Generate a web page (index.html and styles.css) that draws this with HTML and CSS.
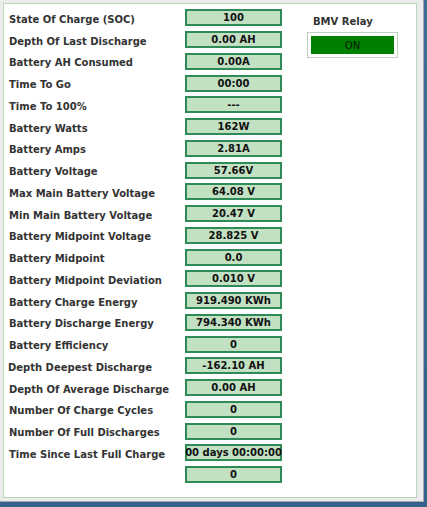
FILE: index.html
```html
<!DOCTYPE html>
<html>
<head>
<meta charset="utf-8">
<link rel="stylesheet" href="styles.css">
</head>
<body>
<div class="window">
  <div class="panel">
    <div class="readings">
      <div class="label">State Of Charge (SOC)</div><div class="value">100</div>
      <div class="label">Depth Of Last Discharge</div><div class="value">0.00 AH</div>
      <div class="label">Battery AH Consumed</div><div class="value">0.00A</div>
      <div class="label">Time To Go</div><div class="value">00:00</div>
      <div class="label">Time To 100%</div><div class="value">---</div>
      <div class="label">Battery Watts</div><div class="value">162W</div>
      <div class="label">Battery Amps</div><div class="value">2.81A</div>
      <div class="label">Battery Voltage</div><div class="value">57.66V</div>
      <div class="label">Max Main Battery Voltage</div><div class="value">64.08 V</div>
      <div class="label">Min Main Battery Voltage</div><div class="value">20.47 V</div>
      <div class="label">Battery Midpoint Voltage</div><div class="value">28.825 V</div>
      <div class="label">Battery Midpoint</div><div class="value">0.0</div>
      <div class="label">Battery Midpoint Deviation</div><div class="value">0.010 V</div>
      <div class="label">Battery Charge Energy</div><div class="value">919.490 KWh</div>
      <div class="label">Battery Discharge Energy</div><div class="value">794.340 KWh</div>
      <div class="label">Battery Efficiency</div><div class="value">0</div>
      <div class="label label-shift">Depth Deepest Discharge</div><div class="value">-162.10 AH</div>
      <div class="label">Depth Of Average Discharge</div><div class="value">0.00 AH</div>
      <div class="label">Number Of Charge Cycles</div><div class="value">0</div>
      <div class="label">Number Of Full Discharges</div><div class="value">0</div>
      <div class="label">Time Since Last Full Charge</div><div class="value">00 days 00:00:00</div>
      <div class="label"></div><div class="value">0</div>
    </div>
    <div class="relay">
      <div class="relay-title">BMV Relay</div>
      <div class="relay-box"><div class="relay-state">ON</div></div>
    </div>
  </div>
</div>
</body>
</html>
```

FILE: styles.css
```css
html, body {
  margin: 0;
  padding: 0;
}
body {
  width: 427px;
  height: 507px;
  overflow: hidden;
  background: linear-gradient(180deg, #3f6d97 0%, #35628c 100%);
  font-family: "DejaVu Sans", "Liberation Sans", sans-serif;
}
.window {
  box-sizing: border-box;
  width: 424px;
  height: 502px;
  background: #ececec;
  border-right: 1px solid #a4a8ac;
  border-bottom: 1px solid #a4a8ac;
  padding: 3px 0 0 3px;
}
.panel {
  box-sizing: border-box;
  width: 414px;
  height: 495px;
  background: #ffffff;
  border: 1px solid #b7d8b7;
  display: flex;
  align-items: flex-start;
}
.readings {
  display: grid;
  grid-template-columns: 176px 97px;
  grid-auto-rows: 21.75px;
  margin: 5.3px 0 0 5px;
}
.label {
  font-weight: bold;
  font-size: 10px;
  color: #333333;
  line-height: 17px;
  padding-top: 1.5px;
  white-space: nowrap;
}
.label-shift {
  margin-left: -1px;
}
.value {
  box-sizing: border-box;
  height: 17px;
  background: #c2e0c2;
  border: 2px solid #2e8b57;
  display: flex;
  justify-content: center;
  align-items: center;
  font-weight: bold;
  font-size: 10px;
  color: #111111;
  white-space: nowrap;
}
.relay {
  margin-left: 25px;
  padding-top: 11.7px;
}
.relay-title {
  font-weight: bold;
  font-size: 10px;
  color: #333333;
  margin-left: 6px;
}
.relay-box {
  box-sizing: border-box;
  width: 91px;
  height: 26px;
  margin-top: 5.7px;
  border: 1px solid #bfd0bf;
  padding: 3px;
  background: #ffffff;
}
.relay-state {
  height: 18px;
  background: #008000;
  display: flex;
  justify-content: center;
  align-items: center;
  font-size: 10px;
  color: #051405;
}
```
